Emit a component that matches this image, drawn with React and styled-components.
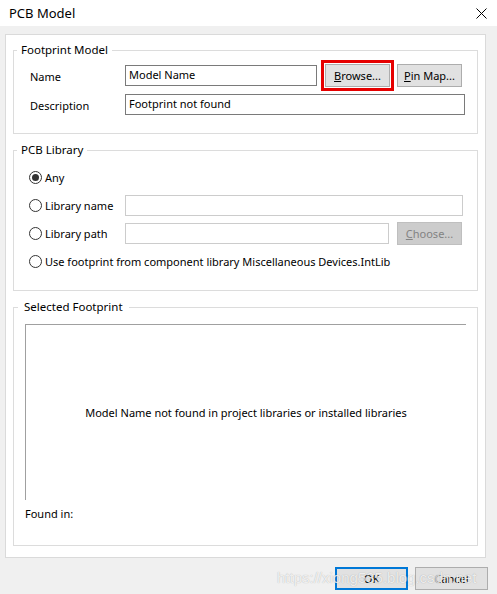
import React from 'react'
import styled, { createGlobalStyle } from 'styled-components'

const GlobalStyle = createGlobalStyle`
  html, body {
    margin: 0;
    padding: 0;
    background: #f0f0f0;
  }
  * { box-sizing: border-box; }
`

const Window = styled.div`
  position: relative;
  width: 497px;
  height: 594px;
  background: #f0f0f0;
  display: flex;
  flex-direction: column;
  font-family: "Noto Sans", "Open Sans", sans-serif;
  font-size: 11px;
  color: #000;
  overflow: hidden;
`

const TitleBar = styled.div`
  height: 26px;
  background: #fff;
  display: flex;
  align-items: center;
  justify-content: space-between;
  padding: 0 10px 0 9px;
`

const Title = styled.span`
  font-size: 13px;
  color: #000;
`

const Panel = styled.div`
  margin: 8px 11px 0 5px;
  background: #fff;
  border: 1px solid #dadada;
  padding: 7px 7px 11px 7px;
  display: flex;
  flex-direction: column;
  gap: 8px;
`

const Group = styled.fieldset`
  margin: 0;
  min-width: 0;
  border: 1px solid #dcdcdc;
  padding: 0;
`

const GroupBody = styled.div`
  padding: ${p => p.$pad};
`

const Legend = styled.legend`
  margin-left: ${p => p.$indent || 3}px;
  padding: 0 ${p => p.$space || 4}px;
  line-height: 16px;
  font-size: 11.5px;
`

const FieldRow = styled.div`
  display: flex;
  align-items: center;
  height: 23px;
  & + & { margin-top: 6px; }
`

const Label = styled.span`
  width: 95px;
  flex-shrink: 0;
  padding-top: 2px;
`

const Input = styled.div`
  width: ${p => p.$w}px;
  height: 21px;
  border: 1px solid ${p => (p.$disabled ? '#cccccc' : '#7a7a7a')};
  background: #fff;
  padding: 0 3px;
  line-height: 18px;
  white-space: nowrap;
`

const Button = styled.div`
  width: ${p => p.$w || 65}px;
  height: 23px;
  margin-left: ${p => p.$ml || 0}px;
  background: ${p => (p.$disabled ? '#cccccc' : '#e1e1e1')};
  border: ${p => (p.$primary ? '2px solid #0078d7' : `1px solid ${p.$disabled ? '#bfbfbf' : '#adadad'}`)};
  color: ${p => (p.$disabled ? '#838383' : '#000')};
  display: flex;
  align-items: center;
  justify-content: center;
  outline: ${p => (p.$highlight ? '3px solid #e60000' : 'none')};
  outline-offset: 1px;
`

const Key = styled.span`
  text-decoration: underline;
`

const RadioList = styled.div`
  display: flex;
  flex-direction: column;
  gap: 4px;
`

const RadioRow = styled.div`
  display: flex;
  align-items: center;
  height: 24px;
`

const RadioLabel = styled.label`
  display: flex;
  align-items: center;
  gap: 3px;
  width: ${p => (p.$w ? `${p.$w}px` : 'auto')};
  flex-shrink: 0;
  white-space: nowrap;
`

const Circle = styled.span`
  width: 13px;
  height: 13px;
  border-radius: 50%;
  border: 1px solid #333;
  background: #fff;
  display: flex;
  align-items: center;
  justify-content: center;
  &::after {
    content: '';
    width: 7px;
    height: 7px;
    border-radius: 50%;
    background: ${p => (p.$checked ? '#333' : 'transparent')};
  }
`

const Preview = styled.div`
  height: 176px;
  border-top: 1px solid #a0a0a0;
  border-left: 1px solid #a0a0a0;
  display: flex;
  align-items: center;
  justify-content: center;
`

const FoundIn = styled.div`
  margin-top: 6px;
  line-height: 16px;
`

const Footer = styled.div`
  display: flex;
  justify-content: flex-end;
  gap: 7px;
  margin: 9px 9px 0 0;
`

const Watermark = styled.div`
  position: absolute;
  left: 277px;
  top: 569px;
  font-family: "Liberation Sans", Arial, sans-serif;
  font-size: 15px;
  color: rgba(255, 255, 255, 0.8);
  text-shadow: 0 0 1px rgba(0, 0, 0, 0.3);
  pointer-events: none;
  white-space: nowrap;
`

const Radio = ({ checked, w, children }) => (
  <RadioLabel $w={w}>
    <Circle $checked={checked} />
    {children}
  </RadioLabel>
)

const CloseIcon = () => (
  <svg width="11" height="11" viewBox="0 0 11 11">
    <path d="M0.5 0.5 L10.5 10.5 M10.5 0.5 L0.5 10.5" stroke="#000" strokeWidth="1" />
  </svg>
)

export default function App() {
  return (
    <>
      <GlobalStyle />
      <Window>
        <TitleBar>
          <Title>PCB Model</Title>
          <CloseIcon />
        </TitleBar>

        <Panel>
          <Group>
            <Legend>Footprint Model</Legend>
            <GroupBody $pad="6px 12px 17px 16px">
              <FieldRow>
                <Label>Name</Label>
                <Input $w={192}>Model Name</Input>
                <Button $ml={8} $highlight><span><Key>B</Key>rowse...</span></Button>
                <Button $ml={7}><span><Key>P</Key>in Map...</span></Button>
              </FieldRow>
              <FieldRow>
                <Label>Description</Label>
                <Input $w={340}>Footprint not found</Input>
              </FieldRow>
            </GroupBody>
          </Group>

          <Group>
            <Legend>PCB Library</Legend>
            <GroupBody $pad="7px 12px 17px 15px">
              <RadioList>
                <RadioRow>
                  <Radio checked>Any</Radio>
                </RadioRow>
                <RadioRow>
                  <Radio w={96}>Library name</Radio>
                  <Input $w={338} $disabled />
                </RadioRow>
                <RadioRow>
                  <Radio w={96}>Library path</Radio>
                  <Input $w={264} $disabled />
                  <Button $ml={8} $disabled><span><Key>C</Key>hoose...</span></Button>
                </RadioRow>
                <RadioRow>
                  <Radio>Use footprint from component library Miscellaneous Devices.IntLib</Radio>
                </RadioRow>
              </RadioList>
            </GroupBody>
          </Group>

          <Group>
            <Legend $indent={4} $space={6}>Selected Footprint</Legend>
            <GroupBody $pad="9px 11px 23px 11px">
              <Preview>Model Name not found in project libraries or installed libraries</Preview>
              <FoundIn>Found in:</FoundIn>
            </GroupBody>
          </Group>
        </Panel>

        <Footer>
          <Button $w={73} $primary>OK</Button>
          <Button $w={73}>Cancel</Button>
        </Footer>

        <Watermark>https://xiong535.blog.csdn.net</Watermark>
      </Window>
    </>
  )
}
